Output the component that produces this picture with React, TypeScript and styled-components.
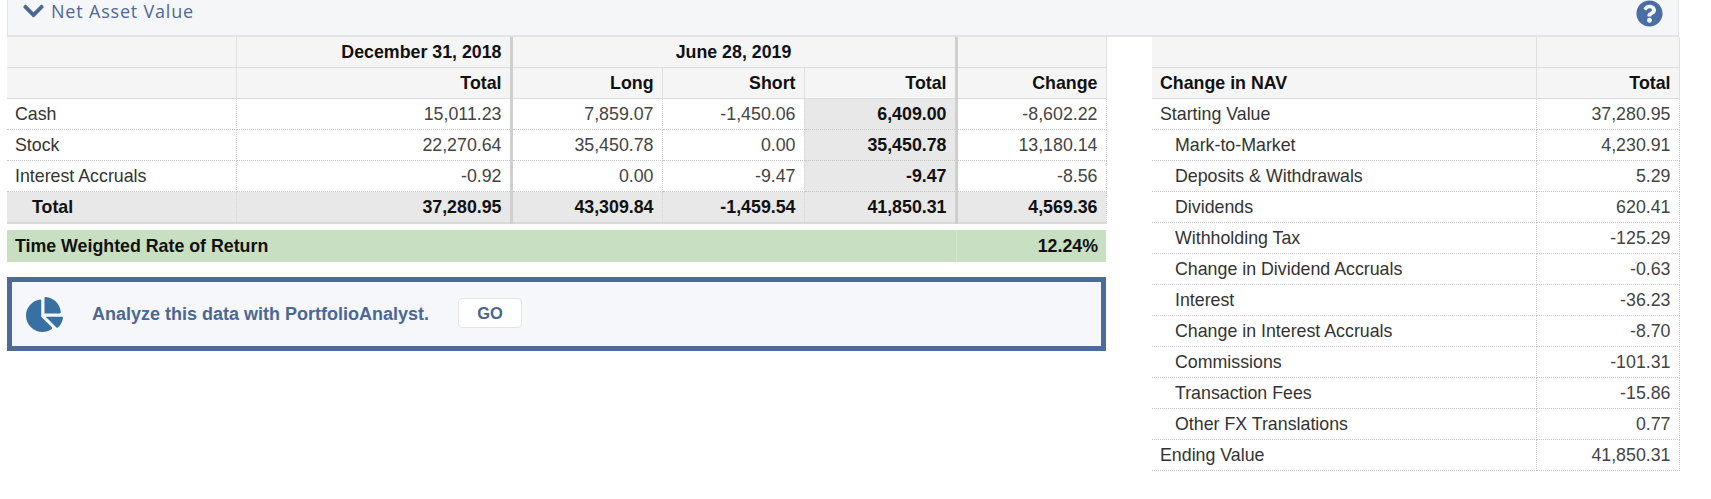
import styled, { createGlobalStyle } from 'styled-components';
import { FaChevronDown, FaQuestionCircle, FaChartPie } from 'react-icons/fa';

const GlobalStyle = createGlobalStyle`
  html, body {
    margin: 0;
    padding: 0;
    background: #fff;
  }
  body {
    font-family: "Liberation Sans", Arial, sans-serif;
    font-size: 17.8px;
    color: #333;
  }
`;

const Page = styled.div`
  width: 1672px;
  padding-left: 7px;
`;

const Header = styled.div`
  display: flex;
  align-items: flex-start;
  justify-content: space-between;
  height: 35px;
  padding: 0 15px 0 15px;
  background: #f5f6f8;
  border: 1px solid #e2e4e7;
  border-top: none;
  border-bottom: 2px solid #e2e4e7;
`;

const HeaderTitle = styled.div`
  display: flex;
  align-items: center;
  gap: 7px;
  height: 22px;
  color: #4f6899;
  font-family: "Open Sans", "Liberation Sans", sans-serif;
  font-size: 18px;
  letter-spacing: 0.8px;

  svg {
    width: 21px;
    height: 24px;
    color: #4a6796;
  }
`;

const HelpIcon = styled(FaQuestionCircle)`
  width: 27px;
  height: 27px;
  color: #4a6ea4;
`;

const Body = styled.div`
  display: flex;
  align-items: flex-start;
  gap: 46px;
`;

const LeftColumn = styled.div`
  width: 1099px;
  display: flex;
  flex-direction: column;
`;

const Table = styled.table`
  border-collapse: collapse;
  table-layout: fixed;
  width: 100%;
`;

const Th = styled.th<{ align?: string; thick?: boolean }>`
  height: 30px;
  padding: 0 8px;
  background: #f5f5f5;
  color: #111;
  font-weight: bold;
  text-align: ${(p) => p.align || 'right'};
  border-bottom: 1px solid #dcdcdc;
  border-right: ${(p) => (p.thick ? '3px solid #cfcfcf' : '1px solid #e0e0e0')};
  white-space: nowrap;
`;

const Td = styled.td<{
  label?: boolean;
  indent?: number;
  shade?: boolean;
  bold?: boolean;
  thick?: boolean;
}>`
  height: 30px;
  padding: 0 8px 0 ${(p) => (p.indent ? p.indent : 8)}px;
  text-align: ${(p) => (p.label ? 'left' : 'right')};
  background: ${(p) => (p.shade ? '#e8e8e8' : '#fff')};
  color: ${(p) => (p.bold ? '#111' : p.label ? '#333' : '#444')};
  font-weight: ${(p) => (p.bold ? 'bold' : 'normal')};
  border-bottom: 1px dotted #c8c8c8;
  border-right: ${(p) => (p.thick ? '3px solid #cfcfcf' : '1px dotted #d4d4d4')};
  white-space: nowrap;
`;

const TotalRow = styled.tr`
  td {
    background: #e8e8e8;
    color: #111;
    font-weight: bold;
    border-bottom: 2px solid #dadada;
  }
`;

const ReturnRow = styled.div`
  display: flex;
  margin-top: 6px;
  height: 32px;
  background: #c9dfc1;
  color: #111;
  font-weight: bold;
`;

const ReturnCell = styled.div<{ grow?: boolean }>`
  display: flex;
  align-items: center;
  padding: 0 8px;
  ${(p) =>
    p.grow
      ? 'flex: 1;'
      : 'width: 150px; box-sizing: border-box; justify-content: flex-end; border-left: 1px solid #d6e7cf;'}
`;

const AnalyzeBox = styled.div`
  display: flex;
  align-items: center;
  margin-top: 15px;
  height: 64px;
  padding-left: 14px;
  background: #f5f7fa;
  border: 5px solid #4d6b96;
`;

const PieIcon = styled(FaChartPie)`
  width: 37px;
  height: 35px;
  color: #3870a1;
  margin-right: 29px;
`;

const AnalyzeText = styled.span`
  color: #4a6795;
  font-weight: bold;
  font-size: 18px;
  margin-right: 29px;
`;

const GoButton = styled.button`
  width: 64px;
  height: 30px;
  margin-top: -2px;
  background: #fff;
  border: 1px solid #e4e4e4;
  border-radius: 4px;
  color: #4a6590;
  font-family: "Liberation Sans", Arial, sans-serif;
  font-weight: bold;
  font-size: 16.5px;
`;

const RightTable = styled(Table)`
  width: 527px;
`;

const navRows: [string, string][] = [
  ['Mark-to-Market', '4,230.91'],
  ['Deposits & Withdrawals', '5.29'],
  ['Dividends', '620.41'],
  ['Withholding Tax', '-125.29'],
  ['Change in Dividend Accruals', '-0.63'],
  ['Interest', '-36.23'],
  ['Change in Interest Accruals', '-8.70'],
  ['Commissions', '-101.31'],
  ['Transaction Fees', '-15.86'],
  ['Other FX Translations', '0.77'],
];

const assetRows = [
  { name: 'Cash', dec: '15,011.23', long: '7,859.07', short: '-1,450.06', total: '6,409.00', change: '-8,602.22' },
  { name: 'Stock', dec: '22,270.64', long: '35,450.78', short: '0.00', total: '35,450.78', change: '13,180.14' },
  { name: 'Interest Accruals', dec: '-0.92', long: '0.00', short: '-9.47', total: '-9.47', change: '-8.56' },
];

export default function App() {
  return (
    <Page>
      <GlobalStyle />
      <Header>
        <HeaderTitle>
          <FaChevronDown />
          Net Asset Value
        </HeaderTitle>
        <HelpIcon />
      </Header>
      <Body>
        <LeftColumn>
          <Table>
            <colgroup>
              <col style={{ width: 229 }} />
              <col style={{ width: 275 }} />
              <col style={{ width: 151 }} />
              <col style={{ width: 142 }} />
              <col style={{ width: 152 }} />
              <col style={{ width: 150 }} />
            </colgroup>
            <thead>
              <tr>
                <Th />
                <Th thick>December 31, 2018</Th>
                <Th colSpan={3} align="center" thick>
                  June 28, 2019
                </Th>
                <Th />
              </tr>
              <tr>
                <Th />
                <Th thick>Total</Th>
                <Th>Long</Th>
                <Th>Short</Th>
                <Th thick>Total</Th>
                <Th>Change</Th>
              </tr>
            </thead>
            <tbody>
              {assetRows.map((r) => (
                <tr key={r.name}>
                  <Td label>{r.name}</Td>
                  <Td thick>{r.dec}</Td>
                  <Td>{r.long}</Td>
                  <Td>{r.short}</Td>
                  <Td shade bold thick>
                    {r.total}
                  </Td>
                  <Td>{r.change}</Td>
                </tr>
              ))}
              <TotalRow>
                <Td label indent={25}>
                  Total
                </Td>
                <Td thick>37,280.95</Td>
                <Td>43,309.84</Td>
                <Td>-1,459.54</Td>
                <Td thick>41,850.31</Td>
                <Td>4,569.36</Td>
              </TotalRow>
            </tbody>
          </Table>
          <ReturnRow>
            <ReturnCell grow>Time Weighted Rate of Return</ReturnCell>
            <ReturnCell>12.24%</ReturnCell>
          </ReturnRow>
          <AnalyzeBox>
            <PieIcon />
            <AnalyzeText>Analyze this data with PortfolioAnalyst.</AnalyzeText>
            <GoButton>GO</GoButton>
          </AnalyzeBox>
        </LeftColumn>
        <RightTable>
          <colgroup>
            <col style={{ width: 384 }} />
            <col style={{ width: 143 }} />
          </colgroup>
          <thead>
            <tr>
              <Th />
              <Th />
            </tr>
            <tr>
              <Th align="left">Change in NAV</Th>
              <Th>Total</Th>
            </tr>
          </thead>
          <tbody>
            <tr>
              <Td label>Starting Value</Td>
              <Td>37,280.95</Td>
            </tr>
            {navRows.map(([name, value]) => (
              <tr key={name}>
                <Td label indent={23}>
                  {name}
                </Td>
                <Td>{value}</Td>
              </tr>
            ))}
            <tr>
              <Td label>Ending Value</Td>
              <Td>41,850.31</Td>
            </tr>
          </tbody>
        </RightTable>
      </Body>
    </Page>
  );
}
